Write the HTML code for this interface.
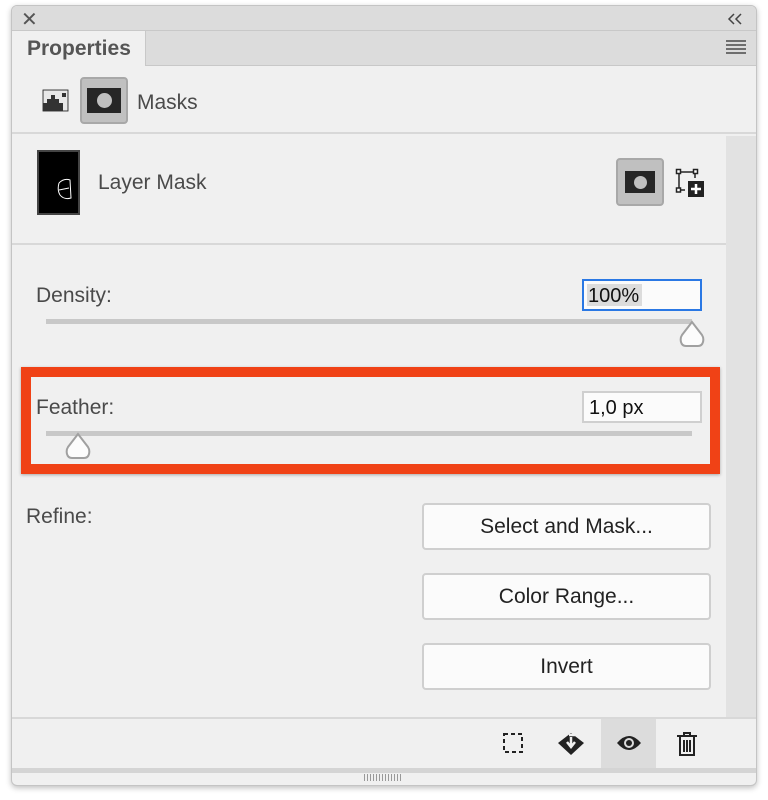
<!DOCTYPE html>
<html><head><meta charset="utf-8"><style>
*{margin:0;padding:0;box-sizing:border-box}
body{width:768px;height:800px;background:#fff;position:relative;font-family:"Liberation Sans",sans-serif;color:#3c3c3c;overflow:hidden}
.a{position:absolute}
.t{font-size:21px;color:#4a4a4a;line-height:1}
.btn{position:absolute;left:422px;width:289px;height:47px;background:#fbfbfb;border:2px solid #cfcfcf;border-radius:4px;font-size:21px;color:#222;text-align:center;line-height:43px}
</style></head><body>
<div class="a" style="left:11px;top:5px;width:746px;height:781px;background:#f0f0f0;border:1px solid #c4c4c4;border-radius:6px;box-shadow:0 2px 6px rgba(0,0,0,.25)"></div>
<div class="a" style="left:12px;top:6px;width:744px;height:25px;background:#dcdcdc;border-radius:5px 5px 0 0;border-bottom:1px solid #c8c8c8"></div>
<div class="a" style="left:21px;top:10px;font-size:20px;color:#555;line-height:1">✕</div>
<svg class="a" style="left:727px;top:13px" width="16" height="12"><path d="M7 1L2 6L7 11M14 1L9 6L14 11" fill="none" stroke="#444" stroke-width="1.5"/></svg>
<div class="a" style="left:12px;top:31px;width:744px;height:35px;background:#dcdcdc;border-bottom:1px solid #c8c8c8"></div>
<div class="a" style="left:12px;top:31px;width:134px;height:35px;background:#f0f0f0;border-right:1px solid #c8c8c8"></div>
<div class="a" style="left:27px;top:37px;font-size:21px;font-weight:bold;color:#555">Properties</div>
<div class="a" style="left:726px;top:40px;width:20px;height:14px;background:repeating-linear-gradient(#6e6e6e 0 2px,transparent 2px 4px)"></div>
<svg class="a" style="left:42px;top:89px" width="27" height="23"><rect width="27" height="23" fill="#fff"/><rect x="1" y="1" width="25" height="21" fill="#e8e8e8" stroke="#333"/><path d="M1 22V14h4v-4h4v-4h4v4h4v4h4v8z" fill="#333"/><rect x="20" y="4" width="4" height="4" fill="#333"/></svg>
<div class="a" style="left:80px;top:77px;width:48px;height:47px;background:#c0c0c0;border:2px solid #a8a8a8;border-radius:4px"></div>
<div class="a" style="left:87px;top:88px;width:34px;height:25px;background:#262626"></div>
<div class="a" style="left:97px;top:93px;width:15px;height:15px;border-radius:50%;background:#c0c0c0"></div>
<div class="a t" style="left:137px;top:92px">Masks</div>
<div class="a" style="left:12px;top:132px;width:744px;height:2px;background:#d8d8d8"></div>
<div class="a" style="left:726px;top:136px;width:30px;height:582px;background:#e2e2e2"></div>
<div class="a" style="left:37px;top:150px;width:43px;height:65px;background:#000;border:2px solid #444"></div>
<svg class="a" style="left:56px;top:178px" width="20" height="24"><path d="M3 5Q8 0 14 2L15 20Q8 22 4 17Q1 12 3 5M3 12L13 10" fill="none" stroke="#fff" stroke-width="1"/></svg>
<div class="a t" style="left:98px;top:172px">Layer Mask</div>
<div class="a" style="left:616px;top:158px;width:48px;height:48px;background:#c0c0c0;border:2px solid #a8a8a8;border-radius:4px"></div>
<div class="a" style="left:625px;top:171px;width:30px;height:22px;background:#262626"></div>
<div class="a" style="left:634px;top:176px;width:13px;height:13px;border-radius:50%;background:#c0c0c0"></div>
<svg class="a" style="left:675px;top:168px" width="30" height="30"><g fill="none" stroke="#222" stroke-width="1.5"><path d="M4 4H20M4 4V22M4 22H10M20 4V10"/><rect x="1.5" y="1.5" width="4" height="4" fill="#fff"/><rect x="18.5" y="1.5" width="4" height="4" fill="#fff"/><rect x="1.5" y="20" width="4" height="4" fill="#fff"/></g><rect x="13" y="13" width="16" height="16" fill="#222"/><path d="M21 16V26M16 21H26" stroke="#fff" stroke-width="2.5"/></svg>
<div class="a" style="left:12px;top:243px;width:714px;height:2px;background:#d8d8d8"></div>
<div class="a t" style="left:36px;top:285px">Density:</div>
<div class="a" style="left:582px;top:279px;width:120px;height:32px;background:#fbfbfb;border:2px solid #2a78e4"></div>
<div class="a" style="left:587px;top:284px;width:55px;height:22px;background:#dcdcdc"></div>
<div class="a" style="left:588px;top:285px;font-size:20px;color:#111">100%</div>
<div class="a" style="left:46px;top:319px;width:646px;height:5px;background:#c8c8c8"></div>
<svg class="a" style="left:679px;top:320px" width="26" height="28"><path d="M13 2L3 15Q1 18 2 22Q3 26 7 26H19Q23 26 24 22Q25 18 23 15Z" fill="#fcfcfc" stroke="#a0a0a0" stroke-width="2"/></svg>
<div class="a" style="left:21px;top:367px;width:699px;height:107px;border:10px solid #f04216;box-shadow:0 1px 3px rgba(0,0,0,.3)"></div>
<div class="a t" style="left:36px;top:397px">Feather:</div>
<div class="a" style="left:582px;top:391px;width:120px;height:32px;background:#fbfbfb;border:2px solid #cfcfcf"></div>
<div class="a" style="left:589px;top:397px;font-size:20px;color:#111">1,0 px</div>
<div class="a" style="left:46px;top:431px;width:646px;height:5px;background:#c8c8c8"></div>
<svg class="a" style="left:65px;top:432px" width="26" height="28"><path d="M13 2L3 15Q1 18 2 22Q3 26 7 26H19Q23 26 24 22Q25 18 23 15Z" fill="#fcfcfc" stroke="#a0a0a0" stroke-width="2"/></svg>
<div class="a t" style="left:26px;top:506px">Refine:</div>
<div class="btn" style="top:503px">Select and Mask...</div>
<div class="btn" style="top:573px">Color Range...</div>
<div class="btn" style="top:643px">Invert</div>
<div class="a" style="left:12px;top:717px;width:744px;height:2px;background:#d8d8d8"></div>
<div class="a" style="left:601px;top:719px;width:55px;height:49px;background:#dcdcdc"></div>
<svg class="a" style="left:502px;top:732px" width="22" height="22"><rect x="2" y="2" width="18" height="18" fill="none" stroke="#222" stroke-width="2" stroke-dasharray="4 3"/></svg>
<svg class="a" style="left:556px;top:729px" width="30" height="28"><path d="M15 4L28 14L15 26L2 14Z" fill="#222"/><path d="M13 6H18V3M15 8V17M11 13L15 18L19 13" fill="none" stroke="#f0f0f0" stroke-width="2.5"/></svg>
<svg class="a" style="left:615px;top:733px" width="28" height="20"><path d="M2 10Q14 -4 26 10Q14 24 2 10Z" fill="#222"/><circle cx="14" cy="10" r="5" fill="#dcdcdc"/><circle cx="14" cy="10" r="3" fill="#222"/></svg>
<svg class="a" style="left:675px;top:731px" width="24" height="26"><g fill="none" stroke="#222" stroke-width="2"><path d="M2 5H22M9 5V2H15V5M5 6V24H19V6M9 9V21M12 9V21M15 9V21"/></g></svg>
<div class="a" style="left:12px;top:768px;width:744px;height:5px;background:#d4d4d4"></div>
<div class="a" style="left:364px;top:774px;width:38px;height:7px;background:repeating-linear-gradient(90deg,#999 0 1px,transparent 1px 3px)"></div>
</body></html>
